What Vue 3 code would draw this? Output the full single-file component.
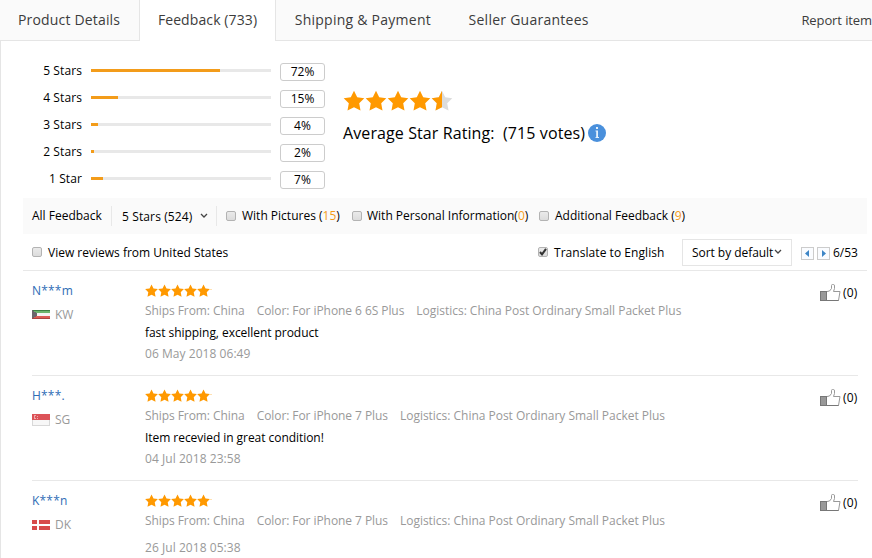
<template>
  <div class="page">
    <nav class="tabs">
      <a
        v-for="tab in tabs"
        :key="tab.label"
        class="tab"
        :class="[tab.cls, { active: tab.active }]"
      ><span>{{ tab.label }}</span></a>
      <a class="report">Report item</a>
    </nav>

    <div class="panel">
      <section class="summary">
        <ul class="histogram">
          <li v-for="row in histogram" :key="row.label" class="histogram-row">
            <span class="histogram-label">{{ row.label }}</span>
            <span class="track"><span class="fill" :style="{ width: row.bar + 'px' }"></span></span>
            <span class="percent">{{ row.percent }}%</span>
          </li>
        </ul>
        <div class="rating">
          <svg class="big-stars" width="110" height="22" viewBox="0 0 110 22">
            <defs>
              <clipPath id="half"><rect x="88" y="0" width="11" height="22" /></clipPath>
            </defs>
            <path v-for="n in 4" :key="n" :d="STAR" :transform="`translate(${(n - 1) * 22} 0)`" fill="#ff9900" />
            <path :d="STAR" transform="translate(88 0)" fill="#dcdcdc" />
            <g clip-path="url(#half)"><path :d="STAR" transform="translate(88 0)" fill="#ff9900" /></g>
          </svg>
          <div class="average">
            <span class="average-label">Average Star Rating:</span>
            <span class="average-votes">(715 votes)</span>
            <svg class="info" width="18" height="18" viewBox="0 0 18 18">
              <circle cx="9" cy="9" r="9" fill="#4a90dc" />
              <path d="M8 3h2v2H8zM7.500 6.500H10v6.500h1v1H7.500v-1h.7V7.500h-.7z" fill="#e4f0fc" />
            </svg>
          </div>
        </div>
      </section>

      <section class="filters">
        <span class="all">All Feedback</span>
        <span class="star-select">
          <span class="star-select-text">5 Stars (524)</span>
          <svg width="8" height="6" viewBox="0 0 8 6"><path d="M1 1l3 3 3-3" class="chevron" /></svg>
        </span>
        <label v-for="f in filters" :key="f.label" class="filter" :class="f.cls">
          <i class="box"></i>
          <span class="filter-text">{{ f.label }}(<em>{{ f.count }}</em>)</span>
        </label>
      </section>

      <section class="toolbar">
        <i class="box"></i>
        <span class="country">View reviews from United States</span>
        <i class="box checked">
          <svg width="10" height="10" viewBox="0 0 10 10"><path d="M2 5l2 2.400L8 1.800" /></svg>
        </i>
        <span class="translate">Translate to English</span>
        <button class="sort">
          <span class="sort-text">Sort by default</span>
          <svg width="8" height="6" viewBox="0 0 8 6"><path d="M1 1l3 3 3-3" class="chevron" /></svg>
        </button>
        <button class="pager"><svg width="11" height="11" viewBox="0 0 11 11"><path d="M7 2v7L3 5.500z" fill="#3d85c6" /></svg></button>
        <button class="pager"><svg width="11" height="11" viewBox="0 0 11 11"><path d="M4 2v7l4-3.500z" fill="#3d85c6" /></svg></button>
        <span class="page-no">6/53</span>
      </section>

      <ul class="reviews">
        <li v-for="r in reviews" :key="r.name" class="review">
          <div class="user">
            <div class="name">{{ r.name }}</div>
            <div class="country-row">
              <svg class="flag" width="18" height="12" viewBox="0 0 18 12" shape-rendering="crispEdges">
                <template v-if="r.country === 'KW'">
                  <rect y="1" width="18" height="9" fill="#f4f4f2" />
                  <rect y="1" width="18" height="3" fill="#6cb56c" />
                  <rect y="1" width="18" height="1" fill="#3f7f43" />
                  <rect y="7" width="18" height="3" fill="#dc5b55" />
                  <path d="M0 1l5 3v3l-5 3z" fill="#6b666b" />
                  <path d="M0 9h18v1H0z" fill="#aa4541" />
                </template>
                <template v-else-if="r.country === 'SG'">
                  <rect width="18" height="12" fill="#d8d8d8" />
                  <rect x="1" width="16" height="11" fill="#f7f7f7" />
                  <rect width="18" height="6" fill="#dc5358" />
                  <path d="M2 1h2v1H3v2h1v1H2zM5 2h1v1H5zM5 4h1v1H5z" fill="#f0a9ab" />
                </template>
                <template v-else>
                  <rect y="1" width="18" height="10" fill="#d74b4b" />
                  <path d="M5 1h2v10H5zM0 5h18v2H0z" fill="#fff" />
                </template>
              </svg>
              <span>{{ r.country }}</span>
            </div>
          </div>
          <div class="body">
            <svg class="small-stars" width="68" height="14" viewBox="0 0 68 14">
              <path v-for="n in 5" :key="n" :d="STAR" :transform="`translate(${(n - 1) * 13 - 0.3} 0) scale(0.62)`" fill="#ff9900" />
              <rect x="65.500" y="5" width="1" height="1" fill="#ffc266" />
            </svg>
            <div class="meta">
              <span class="ships">Ships From: China</span>
              <span class="color">Color: {{ r.color }}</span>
              <span class="logistics">Logistics: China Post Ordinary Small Packet Plus</span>
            </div>
            <div class="text" :class="{ empty: !r.text }">{{ r.text }}</div>
            <div class="date">{{ r.date }}</div>
          </div>
          <div class="helpful">
            <svg width="21" height="18" viewBox="0 0 21 18">
              <rect x="0.500" y="7.500" width="6" height="9" fill="#999" stroke="#777" />
              <path
                d="M7 7.500l2.500-.5 2-2.500V1.500Q11.500.500 12.500.500h1q1 0 1 1.500v2.500L13.500 7.500h6.500l-1.500 9H7"
                fill="#fff"
                stroke="#999"
              />
              <path d="M7 16.500h11.500" stroke="#777" />
            </svg>
            <span>(0)</span>
          </div>
        </li>
      </ul>
    </div>
  </div>
</template>

<script setup>
const STAR = 'M11 .8l3.200 6.400 7.100 1-5.100 5 1.300 7.400L11 17.300l-6.500 3.300 1.300-7.400-5.100-5 7.100-1z'

const tabs = [
  { label: 'Product Details', cls: 'details' },
  { label: 'Feedback (733)', cls: 'feedback', active: true },
  { label: 'Shipping & Payment', cls: 'shipping' },
  { label: 'Seller Guarantees', cls: 'seller' }
]

const histogram = [
  { label: '5 Stars', percent: 72, bar: 129 },
  { label: '4 Stars', percent: 15, bar: 27 },
  { label: '3 Stars', percent: 4, bar: 7 },
  { label: '2 Stars', percent: 2, bar: 3 },
  { label: '1 Star', percent: 7, bar: 12 }
]

const filters = [
  { label: 'With Pictures ', count: 15, cls: 'pictures' },
  { label: 'With Personal Information', count: 0, cls: 'personal' },
  { label: 'Additional Feedback ', count: 9, cls: 'additional' }
]

const reviews = [
  {
    name: 'N***m',
    country: 'KW',
    color: 'For iPhone 6 6S Plus',
    text: 'fast shipping, excellent product',
    date: '06 May 2018 06:49'
  },
  {
    name: 'H***.',
    country: 'SG',
    color: 'For iPhone 7 Plus',
    text: 'Item recevied in great condition!',
    date: '04 Jul 2018 23:58'
  },
  {
    name: 'K***n',
    country: 'DK',
    color: 'For iPhone 7 Plus',
    text: '',
    date: '26 Jul 2018 05:38'
  }
]
</script>

<style>
body {
  margin: 0;
  background: #fff;
}
</style>

<style scoped>
.page {
  box-sizing: border-box;
  width: 872px;
  height: 558px;
  overflow: hidden;
  font-family: "Open Sans", sans-serif;
  font-size: 12px;
  line-height: 18px;
  color: #000;
  white-space: nowrap;
}

ul {
  list-style: none;
  margin: 0;
  padding: 0;
}

svg {
  display: block;
  flex-shrink: 0;
}

/* tabs */
.tabs {
  display: flex;
  height: 41px;
  box-sizing: border-box;
  background: #fafafa;
}

.tab {
  box-sizing: border-box;
  height: 41px;
  padding: 0 0 0 19px;
  border-bottom: 1px solid #e5e5e5;
  font-size: 14px;
  line-height: 40px;
  letter-spacing: 0.25px;
  color: #3c3c3c;
}

.details {
  width: 140px;
  padding-left: 18px;
  border-right: 1px solid #e5e5e5;
  letter-spacing: 0.17px;
}

.tab.active {
  width: 135px;
  padding-left: 18px;
  background: #fff;
  border-bottom-color: #fff;
  letter-spacing: 0.1px;
}

.shipping {
  width: 175px;
  border-left: 1px solid #e5e5e5;
}

.seller {
  width: 170px;
}

.report {
  flex: 1;
  box-sizing: border-box;
  padding-left: 182px;
  border-bottom: 1px solid #e5e5e5;
  font-size: 13px;
  line-height: 40px;
  letter-spacing: -0.1px;
  color: #3c3c3c;
}

.panel {
  box-sizing: border-box;
  height: 517px;
  border-left: 1px solid #e5e5e5;
}

/* rating summary */
.summary {
  box-sizing: border-box;
  display: flex;
  height: 157px;
  padding: 22px 0 0 31px;
}

.histogram {
  width: 293px;
}

.histogram-row {
  display: flex;
  align-items: flex-start;
  height: 27px;
}

.histogram-label {
  width: 50px;
  margin-right: 9px;
  line-height: 16px;
  letter-spacing: 0.1px;
  text-align: right;
}

.track {
  width: 180px;
  height: 3px;
  margin: 6px 9px 0 0;
  background: #e8e8e8;
}

.fill {
  display: block;
  height: 3px;
  background: #f39c1a;
}

.percent {
  box-sizing: border-box;
  width: 45px;
  height: 18px;
  border: 1px solid #ccc;
  border-radius: 3px;
  line-height: 16px;
  text-align: center;
}

.rating {
  padding: 27px 0 0 18px;
}

.average {
  display: flex;
  align-items: center;
  height: 22px;
  margin-top: 10px;
  font-size: 16px;
  letter-spacing: 0.1px;
}

.average-label {
  width: 160px;
}

.average-votes {
  width: 85px;
}

/* filters */
.filters {
  display: flex;
  align-items: center;
  box-sizing: border-box;
  width: 844px;
  height: 36px;
  margin-left: 22px;
  padding-left: 9px;
  background: #fafafa;
}

.all {
  width: 79px;
}

.star-select {
  display: flex;
  align-items: center;
  box-sizing: border-box;
  width: 106px;
  height: 20px;
  padding-left: 10px;
  border-left: 1px solid #e8e8e8;
  border-right: 1px solid #e8e8e8;
}

.star-select-text {
  width: 78px;
  padding-top: 1px;
  letter-spacing: 0.12px;
}

.chevron {
  fill: none;
  stroke: #444;
  stroke-width: 1.3;
}

.filter {
  display: flex;
  align-items: center;
}

.filter em {
  font-style: normal;
  color: #f39c1a;
}

.pictures {
  width: 126px;
  padding-left: 9px;
}

.personal {
  width: 187px;
}

.box {
  display: block;
  box-sizing: border-box;
  flex-shrink: 0;
  width: 10px;
  height: 10px;
  border: 1px solid #b3b3b3;
  border-radius: 2px;
  background: linear-gradient(#eaeaea, #dcdcdc);
}

.filter .box {
  margin-right: 5px;
}

.pictures .box,
.additional .box {
  margin-right: 6px;
}

.checked svg {
  margin: -1px;
}

.checked path {
  fill: none;
  stroke: #333;
  stroke-width: 2;
}

/* toolbar */
.toolbar {
  display: flex;
  align-items: center;
  box-sizing: border-box;
  width: 844px;
  height: 37px;
  margin-left: 22px;
  padding-left: 9px;
  border-bottom: 1px solid #e8e8e8;
}

.country,
.translate,
.sort-text,
.page-no {
  padding-top: 2px;
}

.country {
  width: 490px;
  margin-left: 6px;
}

.translate {
  width: 128px;
  margin-left: 6px;
  letter-spacing: 0.05px;
}

.sort {
  display: flex;
  align-items: center;
  box-sizing: border-box;
  width: 110px;
  height: 27px;
  margin-right: 9px;
  padding: 0 0 0 9px;
  border: 1px solid #e5e5e5;
  background: #fff;
  font: inherit;
  color: inherit;
}

.sort-text {
  width: 82px;
  letter-spacing: -0.05px;
  text-align: left;
}

.pager {
  box-sizing: border-box;
  width: 13px;
  height: 13px;
  margin: 2px 3px 0 0;
  padding: 0;
  border: 1px solid #ccc;
  background: #fafcff;
}

/* reviews */
.reviews {
  width: 826px;
  margin-left: 31px;
}

.review {
  display: flex;
  box-sizing: border-box;
  height: 105px;
  padding-top: 11px;
  border-bottom: 1px solid #e8e8e8;
}

.user {
  width: 113px;
}

.name {
  letter-spacing: 0.2px;
  color: #2e6cb5;
}

.country-row {
  display: flex;
  align-items: center;
  gap: 5px;
  margin-top: 6px;
  color: #999;
}

.body {
  width: 675px;
}

.small-stars {
  margin-top: 2px;
}

.meta {
  display: flex;
  gap: 12px;
  margin-top: 4px;
  color: #999;
}

.ships,
.color {
  letter-spacing: -0.07px;
}

.logistics {
  letter-spacing: -0.02px;
}

.text {
  height: 18px;
  margin-top: 4px;
  letter-spacing: -0.05px;
}

.text.empty {
  height: 6px;
  margin-top: 0;
}

.date {
  margin-top: 3px;
  letter-spacing: 0.05px;
  color: #999;
}

.helpful {
  display: flex;
  gap: 2px;
  height: 22px;
  line-height: 22px;
  letter-spacing: 0.2px;
}

.helpful svg {
  margin-top: 2px;
}
</style>
